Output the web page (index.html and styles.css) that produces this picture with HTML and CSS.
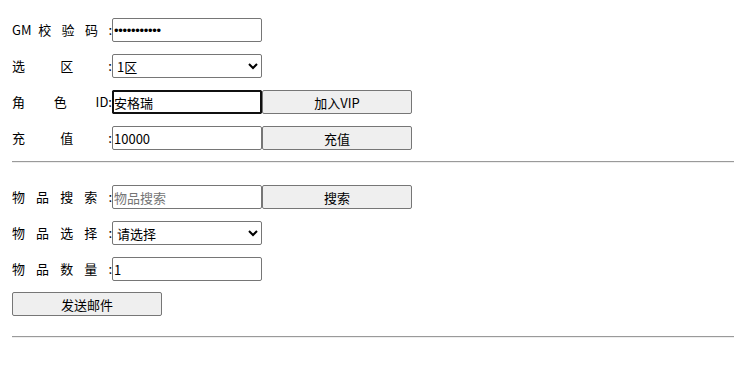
FILE: index.html
```html
<!DOCTYPE html>
<html lang="zh-CN">
<head>
<meta charset="UTF-8">
<title>GM</title>
<link rel="stylesheet" href="styles.css">
</head>
<body>
<div class="page">
  <div class="row">
    <label class="lbl">GM 校 验 码 :</label>
    <input class="field pass" type="password" value="12345678901">
  </div>
  <div class="row">
    <label class="lbl">选 区 :</label>
    <select class="field">
      <option>1区</option>
    </select>
  </div>
  <div class="row">
    <label class="lbl">角 色 ID:</label>
    <input class="field focus" type="text" value="安格瑞">
    <button class="btn">加入VIP</button>
  </div>
  <div class="row">
    <label class="lbl">充 值 :</label>
    <input class="field" type="text" value="10000">
    <button class="btn">充值</button>
  </div>
  <hr class="line first">
  <div class="row">
    <label class="lbl">物 品 搜 索 :</label>
    <input class="field" type="text" placeholder="物品搜索">
    <button class="btn">搜索</button>
  </div>
  <div class="row">
    <label class="lbl">物 品 选 择 :</label>
    <select class="field">
      <option>请选择</option>
    </select>
  </div>
  <div class="row">
    <label class="lbl">物 品 数 量 :</label>
    <input class="field" type="text" value="1">
  </div>
  <div class="row send">
    <button class="btn">发送邮件</button>
  </div>
  <hr class="line last">
</div>
</body>
</html>
```

FILE: styles.css
```css
body {
  margin: 0;
  background: #fff;
  font-family: "Noto Sans CJK SC", "Noto Sans", sans-serif;
  font-size: 13px;
  color: #000;
}

.page {
  padding: 18px 0 0 12px;
}

.row {
  display: flex;
  align-items: center;
  height: 24px;
  margin-bottom: 12px;
}

.row.send {
  margin-top: -1px;
}

.lbl {
  width: 100px;
  text-align: justify;
  text-align-last: justify;
  font-size: 13px;
  line-height: 24px;
}

.field {
  box-sizing: border-box;
  width: 150px;
  height: 24px;
  margin: 0;
  padding: 0 1px;
  border: 1px solid #767676;
  border-radius: 2px;
  background: #fff;
  font-family: "Noto Sans CJK SC", "Noto Sans", sans-serif;
  font-size: 13px;
  color: #000;
}

.field.pass {
  font-family: "Liberation Sans", Arial, sans-serif;
  font-size: 13px;
  letter-spacing: -0.3px;
}

.field::placeholder {
  color: #757575;
}

select.field {
  padding: 0;
}

.focus {
  outline: 2px solid #101010;
  outline-offset: -2px;
  border-color: #101010;
}

.btn {
  box-sizing: border-box;
  width: 150px;
  height: 24px;
  margin: 0;
  padding: 0;
  border: 1px solid #767676;
  border-radius: 2px;
  background: #efefef;
  font-family: "Noto Sans CJK SC", "Noto Sans", sans-serif;
  font-size: 13px;
  color: #000;
}

.line {
  height: 0;
  margin: 0;
  border: none;
  border-top: 1px solid #9a9a9a;
  border-bottom: 1px solid #eeeeee;
}

.line.first {
  margin: -1px 0 22px;
}

.line.last {
  margin-top: 20px;
}
```
